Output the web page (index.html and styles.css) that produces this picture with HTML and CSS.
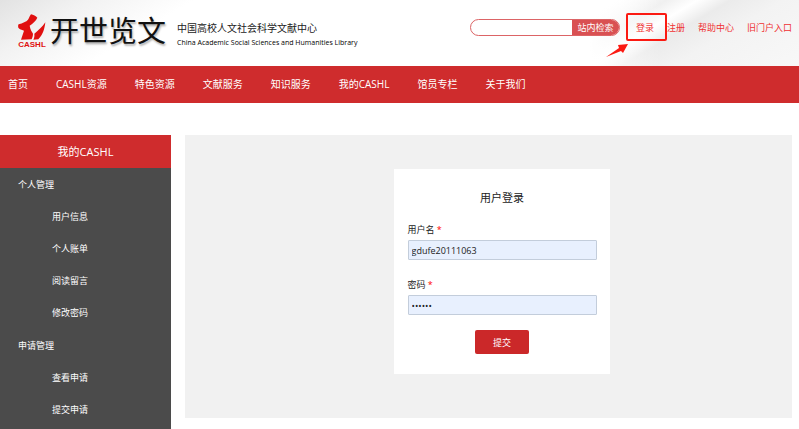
FILE: index.html
```html
<!DOCTYPE html>
<html lang="zh-CN">
<head>
  <meta charset="UTF-8" />
  <meta name="viewport" content="width=device-width, initial-scale=1.0"/>
  <title>用户登录 | CASHL</title>
  <link rel="stylesheet" href="styles.css">
</head>
<body>
  <header class="header">
    <a class="brand" href="#">
      <span class="logo">
        <svg class="logo-mark" viewBox="0 0 84 76" aria-hidden="true">
          <path d="M39 0 C46 1 54 5 58 10 C54 19 45 27 35 34 C37 47 42 52 45 58 C45 64 43 70 41 75 L9 76 C12 67 15 58 18 49 C11 46 4 45 1 40 C0 36 0 32 2 30 C14 26 25 22 30 16 C34 11 35 4 39 0 Z"/>
          <path d="M82 24 C80 44 74 62 61 75 L46 76 C49 70 50 64 49 58 C62 48 73 37 82 24 Z"/>
        </svg>
        <span class="logo-name">CASHL</span>
      </span>
      <span class="brand-title">开世览文</span>
      <span class="brand-text">
        <span class="brand-cn">中国高校人文社会科学文献中心</span>
        <span class="brand-en">China Academic Social Sciences and Humanities Library</span>
      </span>
    </a>

    <div class="tools">
      <form class="search" role="search">
        <input type="text" class="search-input" aria-label="站内检索">
        <button type="submit" class="search-btn">站内检索</button>
      </form>
      <div class="links">
        <a class="marked" href="#">登录
          <svg class="arrow" viewBox="0 0 22 14" aria-hidden="true">
            <path d="M0 13 L13 4 L12 1 L22 0 L17 9 L15 7 Z"/>
          </svg>
        </a>
        <a href="#">注册</a>
        <a href="#">帮助中心</a>
        <a href="#">旧门户入口</a>
      </div>
    </div>
  </header>

  <nav class="nav">
    <a href="#">首页</a>
    <a href="#">CASHL资源</a>
    <a href="#">特色资源</a>
    <a href="#">文献服务</a>
    <a href="#">知识服务</a>
    <a href="#">我的CASHL</a>
    <a href="#">馆员专栏</a>
    <a href="#">关于我们</a>
  </nav>

  <div class="content">
    <aside class="sidebar">
      <h2>我的CASHL</h2>
      <h3>个人管理</h3>
      <ul>
        <li><a href="#">用户信息</a></li>
        <li><a href="#">个人账单</a></li>
        <li><a href="#">阅读留言</a></li>
        <li><a href="#">修改密码</a></li>
      </ul>
      <h3>申请管理</h3>
      <ul>
        <li><a href="#">查看申请</a></li>
        <li><a href="#">提交申请</a></li>
      </ul>
    </aside>

    <main class="main">
      <form class="login">
        <h1>用户登录</h1>
        <div class="field">
          <label for="username">用户名 <span class="required">*</span></label>
          <input type="text" id="username" value="gdufe20111063">
        </div>
        <div class="field">
          <label for="password">密码 <span class="required">*</span></label>
          <input type="password" id="password" value="123456">
        </div>
        <button type="submit" class="submit-btn">提交</button>
      </form>
    </main>
  </div>
</body>
</html>
```
FILE: styles.css
```css
:root {
  --red: #cf2c2d;
  --link: #f03232;
  --mark: #fb1a12;
  --dark: #4b4b4b;
  --panel: #f1f1f1;
}

* {
  box-sizing: border-box;
}

body {
  margin: 0;
  min-height: 100vh;
  display: flex;
  flex-direction: column;
  font-family: 'Open Sans', 'Noto Sans CJK SC', sans-serif;
  font-size: 9px;
  color: #222;
  background: #fff;
}

a {
  color: inherit;
  text-decoration: none;
}

input, button {
  font-family: inherit;
  font-size: 9px;
}

h1, h2, h3, ul {
  margin: 0;
  padding: 0;
  font-weight: 400;
}

ul {
  list-style: none;
}

/* Header */
.header {
  display: flex;
  justify-content: space-between;
  align-items: flex-start;
  height: 66px;
  padding: 0 7px 0 18px;
  background:
    linear-gradient(149deg, #e2e2e2 0, #f2f2f2 45px, rgba(255,255,255,0) 100px) left / 200px 100% no-repeat,
    linear-gradient(90deg, #fff 30px, rgba(255,255,255,0) 100px) right / 239px 100% no-repeat,
    linear-gradient(149deg, #fff 30px, #f0f0f0 55px, #fff 71px, #ebebeb 88px, #f3f3f3 115px, #f8f8f8) right / 239px 100% no-repeat,
    #fff;
}

.brand {
  display: flex;
  align-items: flex-start;
  padding-top: 14px;
}

.logo {
  display: flex;
  flex-direction: column;
  align-items: center;
  width: 28px;
}

.logo-mark {
  width: 28px;
  height: 26px;
  fill: #e01010;
}

.logo-name {
  font: bold 8px/10px 'Liberation Sans', sans-serif;
  color: #e01010;
}

.brand-title {
  margin-left: 4px;
  font-size: 29px;
  line-height: 34px;
  color: #111;
  text-shadow: 1px 2px 2px rgba(0,0,0,0.3);
}

.brand-text {
  display: flex;
  flex-direction: column;
  margin-left: 11px;
  padding-top: 6px;
  color: #222;
  white-space: nowrap;
}

.brand-cn {
  font-size: 10px;
  line-height: 16px;
}

.brand-en {
  font-size: 7px;
  line-height: 14px;
  color: #000;
}

.tools {
  display: flex;
  align-items: center;
  gap: 16px;
  padding-top: 19px;
  white-space: nowrap;
}

.search {
  display: flex;
  width: 150px;
  height: 17px;
  border: 1px solid #dc6466;
  border-radius: 9px;
  background: #fff;
  overflow: hidden;
}

.search-input {
  flex: 1;
  min-width: 0;
  border: none;
  padding: 0 8px;
  background: transparent;
  outline: none;
}

.search-btn {
  width: 47px;
  padding: 0;
  border: none;
  background: #d95052;
  color: #fff;
  cursor: pointer;
}

.links {
  display: flex;
  gap: 13px;
  color: var(--link);
}

.marked {
  position: relative;
}

/* frame around the login link */
.marked::before {
  content: '';
  position: absolute;
  top: -8px;
  bottom: -7px;
  left: -10px;
  right: -13px;
  border: 2px solid var(--mark);
  border-radius: 2px;
}

.arrow {
  position: absolute;
  top: 23px;
  left: -30px;
  width: 22px;
  height: 14px;
  fill: var(--mark);
}

/* Navigation */
.nav {
  display: flex;
  gap: 28px;
  padding: 0 8px;
  background: var(--red);
  color: #fff;
  font-size: 10px;
  line-height: 37px;
  white-space: nowrap;
}

/* Content */
.content {
  flex: 1;
  display: flex;
  align-items: flex-start;
  gap: 14px;
  padding: 32px 7px 0 0;
}

.sidebar {
  flex: none;
  align-self: stretch;
  width: 171px;
  background: var(--dark);
  color: #fff;
}

.sidebar h2 {
  background: var(--red);
  font-size: 11px;
  line-height: 33px;
  text-align: center;
}

.sidebar h3 {
  padding-left: 18px;
  font-size: 9px;
  line-height: 33px;
}

.sidebar li {
  padding-left: 52px;
  line-height: 32px;
}

.main {
  flex: 1;
  display: flex;
  justify-content: center;
  padding: 34px 0 44px 26px;
  background: var(--panel);
}

/* Login form */
.login {
  display: flex;
  flex-direction: column;
  width: 216px;
  padding: 20px 13px 20px 14px;
  background: #fff;
}

.login h1 {
  margin-bottom: 13px;
  font-size: 11px;
  line-height: 18px;
  text-align: center;
}

.field {
  display: flex;
  flex-direction: column;
  margin-bottom: 15px;
}

.field label {
  line-height: 20px;
}

.required {
  color: #f00;
  line-height: 1;
}

.field input {
  height: 20px;
  padding: 0 3px;
  border: 1px solid #c3cddb;
  border-radius: 1px;
  background: #e8f0fe;
  color: #222;
}

.submit-btn {
  align-self: center;
  width: 54px;
  height: 24px;
  border: none;
  border-radius: 2px;
  background: #cb2829;
  color: #fff;
  cursor: pointer;
}
```
